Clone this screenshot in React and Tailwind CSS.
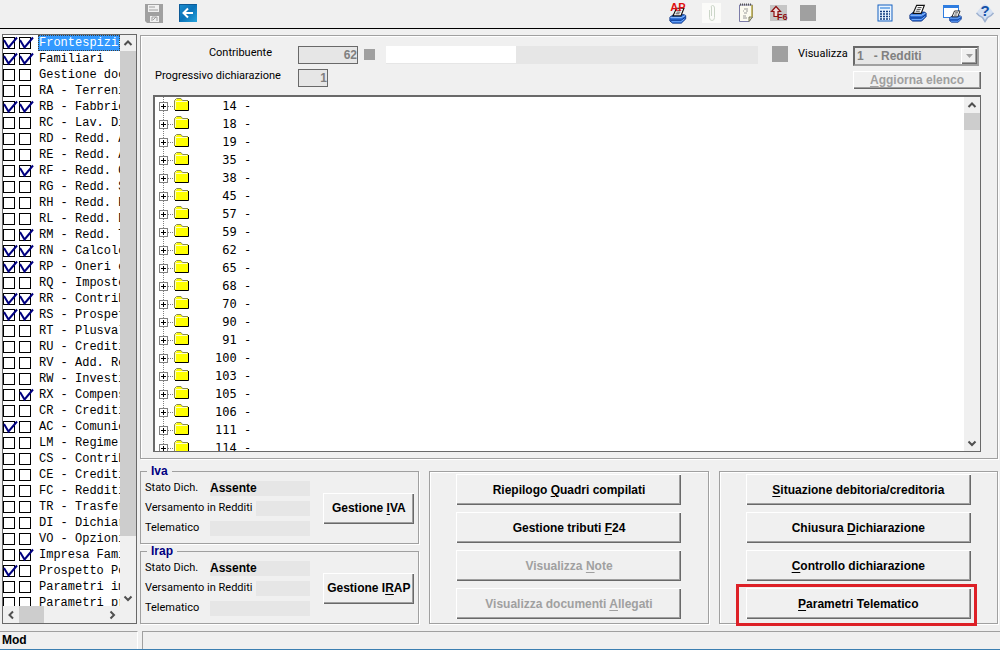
import { useState } from "react"

// [name, first box, second box]
const QUADRI = [
  ["Frontespizio", true, true],
  ["Familiari", true, true],
  ["Gestione doc", false, false],
  ["RA - Terreni", false, false],
  ["RB - Fabbric", true, true],
  ["RC - Lav. Di", false, false],
  ["RD - Redd. A", false, false],
  ["RE - Redd. A", false, false],
  ["RF - Redd. O", false, true],
  ["RG - Redd. S", false, false],
  ["RH - Redd. P", false, false],
  ["RL - Redd. D", false, false],
  ["RM - Redd. T", false, true],
  ["RN - Calcolo", true, true],
  ["RP - Oneri e", true, true],
  ["RQ - Imposte", false, false],
  ["RR - Contrib", true, true],
  ["RS - Prospet", true, true],
  ["RT - Plusval", false, false],
  ["RU - Crediti", false, false],
  ["RV - Add. Re", false, false],
  ["RW - Investi", false, false],
  ["RX - Compens", false, true],
  ["CR - Crediti", false, false],
  ["AC - Comunic", true, false],
  ["LM - Regime", false, false],
  ["CS - Contrib", false, false],
  ["CE - Crediti", false, false],
  ["FC - Redditi", false, false],
  ["TR - Trasfer", false, false],
  ["DI - Dichiar", false, false],
  ["VO - Opzioni", false, false],
  ["Impresa Fami", false, true],
  ["Prospetto Pe", true, false],
  ["Parametri im", false, false],
  ["Parametri pr", false, false],
]

const CONTRIBUENTI = [
  14, 18, 19, 35, 38, 45, 57, 59, 62, 65, 68, 70, 90, 91, 100, 103, 105, 106, 111, 114,
]

const raised =
  "bg-[#f0f0f0] shadow-[inset_1px_1px_0_#ffffff,inset_-1px_-1px_0_#696969,inset_-2px_-2px_0_#a0a0a0]"
const etched = "border border-[#a0a0a0] shadow-[1px_1px_0_#ffffff,inset_1px_1px_0_#ffffff]"

// label with the accelerator letter underlined: "Gestione &IVA"
function Accel({ text }) {
  const i = text.indexOf("&")
  return (
    <span>
      {text.slice(0, i)}
      <span className="underline underline-offset-2">{text[i + 1]}</span>
      {text.slice(i + 2)}
    </span>
  )
}

function Button({ text, disabled, className }) {
  return (
    <button
      type="button"
      disabled={disabled}
      className={`${raised} font-['Liberation_Sans',Arial,sans-serif] text-[12px] leading-4 font-bold text-black disabled:text-[#a0a0a0] whitespace-nowrap ${className}`}
    >
      <Accel text={text} />
    </button>
  )
}

function Arrow({ dir }) {
  const d = {
    up: "M1.5 7L5 3.5L8.5 7",
    down: "M1.5 3.5L5 7L8.5 3.5",
    left: "M7 1.5L3.5 5L7 8.5",
    right: "M3.5 1.5L7 5L3.5 8.5",
  }[dir]
  return (
    <svg width="10" height="10" viewBox="0 0 10 10" fill="none" stroke="#505050" strokeWidth="2">
      <path d={d} />
    </svg>
  )
}

function ScrollButton({ dir, label }) {
  return (
    <button type="button" aria-label={label} className="size-4 shrink-0 flex items-center justify-center">
      <Arrow dir={dir} />
    </button>
  )
}

function PrinterShape() {
  return (
    <g>
      <path d="M1 12L5 9H17L19 10V14L14 19H4L1 16.5Z" fill="#2a6fdc" stroke="#0b2f7e" />
      <path d="M1.5 12.5H14L18.5 10" fill="none" stroke="#a9d0ff" />
      <path d="M2 15.5H14L18.5 12" fill="none" stroke="#0b2f7e" />
      <path d="M3 17.3H13.5L17.5 14" fill="none" stroke="#7db4ff" />
      <path d="M4.5 10.5L8.5 1.5H17L13.5 10.5Z" fill="#fff" stroke="#111" strokeWidth="1.3" />
      <path d="M9.5 4H14M8.5 6H13M7.5 8H12" stroke="#333" />
    </g>
  )
}

function SaveIcon() {
  return (
    <svg width="18" height="19" viewBox="0 0 18 19">
      <path d="M0 0H18V19H2L0 17Z" fill="#a0a0a0" />
      <path d="M3 1H14V8H3Z" fill="#f0f0f0" />
      <path d="M4 3H10M4 6H13" stroke="#a0a0a0" />
      <path d="M5 12H14V18H5Z" fill="#f0f0f0" />
      <path d="M7 17V13H12V17M8 16L11 13" fill="none" stroke="#a0a0a0" />
    </svg>
  )
}

function BackIcon() {
  return (
    <svg width="18" height="18" viewBox="0 0 18 18">
      <defs>
        <linearGradient id="back" x1="0" y1="0" x2="1" y2="1">
          <stop offset="0" stopColor="#1e8fcf" />
          <stop offset="0.5" stopColor="#0a72b8" />
          <stop offset="1" stopColor="#27a4dc" />
        </linearGradient>
      </defs>
      <rect width="18" height="18" fill="url(#back)" />
      <path d="M0.5 17.5V0.5H17.5" fill="none" stroke="#0d5a96" />
      <path d="M14 9H5M9 4.5L4.5 9L9 13.5" fill="none" stroke="#fff" strokeWidth="2" />
    </svg>
  )
}

function ApPrinterIcon() {
  return (
    <svg width="20" height="22" viewBox="0 0 20 22">
      <g transform="translate(1 5) scale(.88 .85)">
        <PrinterShape />
      </g>
      <text x="10" y="9" textAnchor="middle" fontFamily="Liberation Sans, sans-serif" fontSize="11" fontWeight="bold" fill="#e01010">
        AP
      </text>
    </svg>
  )
}

function ClipIcon() {
  return (
    <svg width="22" height="20" viewBox="0 0 22 20">
      <rect x="2" width="19" height="20" fill="#fbfbf9" />
      <path d="M9.5 7V14.5Q9.5 17.5 12 17.5T14.5 14.5V5Q14.5 2.5 12.5 2.5T11.5 5V13" fill="none" stroke="#cbd6c8" />
    </svg>
  )
}

function NotepadIcon() {
  return (
    <svg width="24" height="20" viewBox="0 0 24 20">
      <path d="M5.5 2H18.5V14L15 18.5H5.5Z" fill="#fcfbf0" stroke="#7c7ca8" />
      <path d="M18.5 14H15V18.5Z" fill="#d8d8b0" stroke="#7a7a60" />
      <path d="M18 2V14" stroke="#b5a642" strokeWidth="1.5" />
      <path d="M6 1.5H18" stroke="#555" strokeWidth="2" strokeDasharray="1 1" />
      <path d="M10 6H14M9 8H10M12 8H14M10 10H13M9 13H12M9 15H13" stroke="#9a9a9a" />
    </svg>
  )
}

function F6Icon() {
  return (
    <svg width="18" height="18" viewBox="0 0 18 18">
      <rect x="0" y="1" width="17" height="16" fill="#c6c6c6" />
      <path d="M4 12.5V7.5H1.5L6 2.5L10.5 7.5H8V12.5Z" fill="#f0dede" stroke="#8e1010" strokeWidth="1.2" />
      <text x="7" y="16" fontFamily="Liberation Sans, sans-serif" fontSize="9" fontWeight="bold" fill="#8e1010">
        F6
      </text>
    </svg>
  )
}

function CalculatorIcon() {
  return (
    <svg width="18" height="18" viewBox="0 0 18 18">
      <rect x="2" y="1" width="14" height="16" fill="#eaf4ff" stroke="#1560c0" />
      <rect x="4" y="3" width="10" height="2" fill="#7fb2ea" />
      <path d="M4 7.5H14M4 10H14M4 12.5H14M4 15H14" stroke="#123c80" strokeWidth="1.3" strokeDasharray="2 1" />
    </svg>
  )
}

function PrinterIcon() {
  return (
    <svg width="20" height="20" viewBox="0 0 20 20">
      <g transform="translate(1 1) scale(.9)">
        <PrinterShape />
      </g>
    </svg>
  )
}

function WindowPrinterIcon() {
  return (
    <svg width="20" height="20" viewBox="0 0 20 20">
      <rect x="1.5" y="2.5" width="15" height="12" fill="#fff" stroke="#2f7de0" />
      <path d="M1 3.5H17" stroke="#2f7de0" strokeWidth="3" />
      <g transform="translate(7 7) scale(.65)">
        <PrinterShape />
      </g>
    </svg>
  )
}

function HelpIcon() {
  return (
    <svg width="18" height="20" viewBox="0 0 18 20">
      <path d="M9 1Q13 3 17.5 10Q15.5 13 12 14.5L9 19L6 14.5Q2.5 13 0.5 10Q5 3 9 1Z" fill="#d4e0f2" />
      <path d="M0.5 10Q3 13.5 6.5 14.5L9 18.5L11.5 14.5Q15 13.5 17.5 10" fill="none" stroke="#9fb2d0" strokeWidth="1.5" />
      <text x="9" y="13" textAnchor="middle" fontFamily="Liberation Sans, sans-serif" fontSize="15" fontWeight="bold" fill="#1450a8">
        ?
      </text>
    </svg>
  )
}

function ToolButton({ label, children }) {
  return (
    <button type="button" aria-label={label} title={label} className="block">
      {children}
    </button>
  )
}

function CheckBox({ label, defaultChecked }) {
  return (
    <label className="relative block size-3 mr-1">
      <input
        type="checkbox"
        aria-label={label}
        defaultChecked={defaultChecked}
        className="peer block size-3 appearance-none border border-black bg-white"
      />
      <svg
        className="absolute top-0 left-0 hidden peer-checked:block overflow-visible pointer-events-none"
        width="14"
        height="12"
        viewBox="0 0 14 12"
        fill="none"
        stroke="#000080"
        strokeWidth="2"
      >
        <path d="M1 3L5.5 10.5L14 0.5" />
      </svg>
    </label>
  )
}

function TreeGlyph() {
  return (
    <svg width="32" height="18" viewBox="0 0 32 18" className="block">
      <path d="M4.5 0V18" stroke="#808080" strokeDasharray="1 1" />
      <path d="M9 9.5H15" stroke="#808080" strokeDasharray="1 1" />
      <rect x="0.5" y="5.5" width="8" height="8" fill="#fff" stroke="#808080" />
      <path d="M2 9.5H7M4.5 7V12" stroke="#000" />
      <path d="M16 13V4L18 2H22L24 4H29V13Z" fill="#ffff00" />
      <path d="M15.5 13V3.5L17.5 1.5H22L23.5 3.5H29" fill="none" stroke="#8a8a50" />
      <path d="M16.5 12V4.5H28" fill="none" stroke="#ffffc8" />
      <path d="M16 13.5H29.5V4" fill="none" stroke="#000" />
    </svg>
  )
}

function StatoRow({ label, value, short }) {
  return (
    <div className="flex h-5 items-center justify-between">
      <span className="whitespace-nowrap">{label}</span>
      <span
        className={`h-[15px] bg-[#e6e6e6] font-['Liberation_Sans',Arial,sans-serif] text-[12px] leading-[15px] font-bold ${
          short ? "w-[54px]" : "w-[100px]"
        }`}
      >
        {value}
      </span>
    </div>
  )
}

function StatoBox({ title, button }) {
  return (
    <fieldset className="min-w-0 border border-[#a0a0a0] shadow-[1px_1px_0_#ffffff] px-1 pb-[5px]">
      <legend className="ml-[2px] px-1 font-['Liberation_Sans',Arial,sans-serif] text-[12px] leading-[13px] font-bold text-[#000080]">
        {title}
      </legend>
      <div className="flex items-center justify-between">
        <div className="w-[165px]">
          <StatoRow label="Stato Dich." value="Assente" />
          <StatoRow label="Versamento in Redditi" short />
          <StatoRow label="Telematico" />
        </div>
        <Button text={button} className="h-[31px] w-[91px]" />
      </div>
    </fieldset>
  )
}

function Sidebar() {
  const [selected, setSelected] = useState("Frontespizio")

  return (
    <aside className="w-[135px] shrink-0 flex flex-col border border-[#696969] bg-white">
      <div className="flex flex-1 min-h-0">
        <ul className="flex-1 min-w-0 overflow-hidden">
          {QUADRI.map(([name, a, b], i) => (
            <li key={i} className="flex h-4 items-center">
              <CheckBox label={`${name} (dichiarante)`} defaultChecked={a} />
              <CheckBox label={`${name} (stampa)`} defaultChecked={b} />
              <button
                type="button"
                onClick={() => setSelected(name)}
                className={`ml-[3px] h-4 flex-1 min-w-0 overflow-hidden pl-px text-left font-['Liberation_Mono',monospace] text-[12px] leading-4 whitespace-nowrap ${
                  selected === name
                    ? "bg-[#3399ff] text-white outline-1 -outline-offset-1 outline-dotted outline-[#404040]"
                    : "text-black"
                }`}
              >
                {name}
              </button>
            </li>
          ))}
        </ul>
        <div className="w-4 flex flex-col bg-[#f0f0f0]">
          <ScrollButton dir="up" label="Scorri su" />
          <div className="flex-1 flex flex-col">
            <div className="h-[90%] bg-[#cdcdcd]" />
          </div>
          <ScrollButton dir="down" label="Scorri giù" />
        </div>
      </div>
      <div className="flex h-[17px] items-center bg-[#f0f0f0] pr-4">
        <ScrollButton dir="left" label="Scorri a sinistra" />
        <div className="flex-1 h-full">
          <div className="h-full w-[25px] bg-[#cdcdcd]" />
        </div>
        <ScrollButton dir="right" label="Scorri a destra" />
      </div>
    </aside>
  )
}

function Testata() {
  const field =
    "block h-[18px] border border-[#696969] bg-[#e6e6e6] text-right font-['Liberation_Sans',Arial,sans-serif] text-[12px] font-bold text-[#808080]"
  return (
    <div className="flex items-start pl-[2px]">
      <div className="grid grid-cols-[123px_auto] gap-x-5 gap-y-[5px]">
        <label htmlFor="contribuente" className="pr-[6px] text-right leading-[14px]">
          Contribuente
        </label>
        <input id="contribuente" disabled defaultValue="62" className={`${field} w-[60px]`} />
        <label htmlFor="progressivo" className="leading-[14px] whitespace-nowrap">
          Progressivo dichiarazione
        </label>
        <input id="progressivo" disabled defaultValue="1" className={`${field} w-[30px]`} />
      </div>
      <div className="ml-[6px] mt-[3px] size-[11px] bg-[#a0a0a0]" />
      <div className="ml-[11px] h-[18px] flex-1 bg-[#e6e6e6]">
        <div className="h-[17px] w-[35%] bg-white" />
      </div>
      <div className="ml-[14px] size-4 bg-[#a0a0a0]" />
      <label htmlFor="visualizza" className="ml-[10px] w-[55px] leading-4">
        Visualizza
      </label>
      <div className="w-[128px] flex flex-col gap-[5px]">
        <div className="relative">
          <select
            id="visualizza"
            disabled
            className="block h-5 w-[126px] appearance-none border-2 border-t-[#696969] border-l-[#696969] border-r-[#a0a0a0] border-b-[#a0a0a0] bg-[#e6e6e6] pl-[2px] font-['Liberation_Sans',Arial,sans-serif] text-[12px] leading-4 font-bold text-[#808080] opacity-100"
          >
            <option>{"1\u00a0\u00a0\u00a0- Redditi"}</option>
          </select>
          <span
            className={`absolute top-[2px] right-1 size-4 flex items-center justify-center pointer-events-none ${raised}`}
          >
            <svg width="7" height="4" viewBox="0 0 7 4">
              <path d="M0 0H7L3.5 4Z" fill="#a0a0a0" />
            </svg>
          </span>
        </div>
        <Button text="&Aggiorna elenco" disabled className="h-[18px] w-full" />
      </div>
    </div>
  )
}

function Tree() {
  return (
    <div className="mt-[6px] flex flex-1 min-h-0 border-t-2 border-l-2 border-r border-b border-[#696969] bg-white">
      <ul className="flex-1 overflow-hidden pl-1">
        {CONTRIBUENTI.map((n) => (
          <li key={n} className="flex h-[18px] items-center">
            <button type="button" aria-label={`Espandi ${n}`}>
              <TreeGlyph />
            </button>
            <span className="ml-6 font-['DejaVu_Sans_Mono',monospace] text-[12px] leading-4 whitespace-pre">
              {`${String(n).padStart(3)} -`}
            </span>
          </li>
        ))}
      </ul>
      <div className="w-4 flex flex-col bg-[#f0f0f0]">
        <ScrollButton dir="up" label="Scorri elenco su" />
        <div className="flex-1">
          <div className="h-[17px] bg-[#cdcdcd]" />
        </div>
        <ScrollButton dir="down" label="Scorri elenco giù" />
      </div>
    </div>
  )
}

export default function App() {
  return (
    <div className="h-screen min-w-[960px] flex flex-col overflow-hidden bg-[#f0f0f0] font-['Roboto',Arial,sans-serif] text-[11px] text-black">
      {/* Toolbar */}
      <header className="flex h-[29px] shrink-0 items-center border-b border-black pl-[145px] pr-[6px] pb-[2px]">
        <div className="flex items-center gap-4">
          <ToolButton label="Salva"><SaveIcon /></ToolButton>
          <ToolButton label="Indietro"><BackIcon /></ToolButton>
        </div>
        <div className="ml-auto flex items-center gap-3">
          <ToolButton label="Stampa AP"><ApPrinterIcon /></ToolButton>
          <ToolButton label="Allegati"><ClipIcon /></ToolButton>
          <ToolButton label="Note"><NotepadIcon /></ToolButton>
          <ToolButton label="Richiama F6"><F6Icon /></ToolButton>
          <div className="size-4 bg-[#a0a0a0]" />
        </div>
        <div className="ml-[60px] flex items-center gap-[14px]">
          <ToolButton label="Calcolatrice"><CalculatorIcon /></ToolButton>
          <ToolButton label="Stampa"><PrinterIcon /></ToolButton>
          <ToolButton label="Anteprima"><WindowPrinterIcon /></ToolButton>
          <ToolButton label="Guida"><HelpIcon /></ToolButton>
        </div>
      </header>

      <div className="flex flex-1 min-h-0 gap-[3px] pt-[5px] pr-[2px] pb-[7px] pl-[2px]">
        <Sidebar />

        <main className="flex-1 min-w-0 flex flex-col gap-[6px] pt-px">
          {/* Taxpayer selection */}
          <section className={`flex flex-1 min-h-0 flex-col pt-[10px] pr-4 pb-[6px] pl-3 ${etched}`}>
            <Testata />
            <Tree />
          </section>

          {/* Actions */}
          <section className="grid grid-cols-3 gap-[10px]">
            <div className="flex flex-col gap-px">
              <StatoBox title="Iva" button="Gestione &IVA" />
              <StatoBox title="Irap" button="Gestione I&RAP" />
            </div>
            <div className={`mt-[6px] flex flex-col items-center gap-[7px] pt-[2px] ${etched}`}>
              <Button text="Riepilogo &Quadri compilati" className="h-[31px] w-[225px]" />
              <Button text="Gestione tributi &F24" className="h-[31px] w-[225px]" />
              <Button text="Visualizza &Note" disabled className="h-[31px] w-[225px]" />
              <Button text="Visualizza documenti &Allegati" disabled className="h-[31px] w-[225px]" />
            </div>
            <div className={`mt-[6px] flex flex-col items-center gap-[7px] pt-[2px] ${etched}`}>
              <Button text="&Situazione debitoria/creditoria" className="h-[31px] w-[225px]" />
              <Button text="Chiusura &Dichiarazione" className="h-[31px] w-[225px]" />
              <Button text="&Controllo dichiarazione" className="h-[31px] w-[225px]" />
              <div className="relative">
                <Button text="&Parametri Telematico" className="h-[31px] w-[225px]" />
                <div className="absolute -top-1 -right-[6px] -bottom-[7px] -left-[10px] border-[3px] border-[#dd2027] pointer-events-none" />
              </div>
            </div>
          </section>
        </main>
      </div>

      {/* Status bar */}
      <footer className="flex h-[19px] shrink-0 gap-1 border-b border-[#3c7fb1] font-['Liberation_Sans',Arial,sans-serif]">
        <div className="w-[138px] border-t border-r border-t-[#a0a0a0] border-r-white pl-[2px] text-[12px] leading-[17px] font-bold">
          Mod
        </div>
        <div className="flex-1 border-t border-l border-t-[#a0a0a0] border-l-[#a0a0a0]" />
      </footer>
    </div>
  )
}
